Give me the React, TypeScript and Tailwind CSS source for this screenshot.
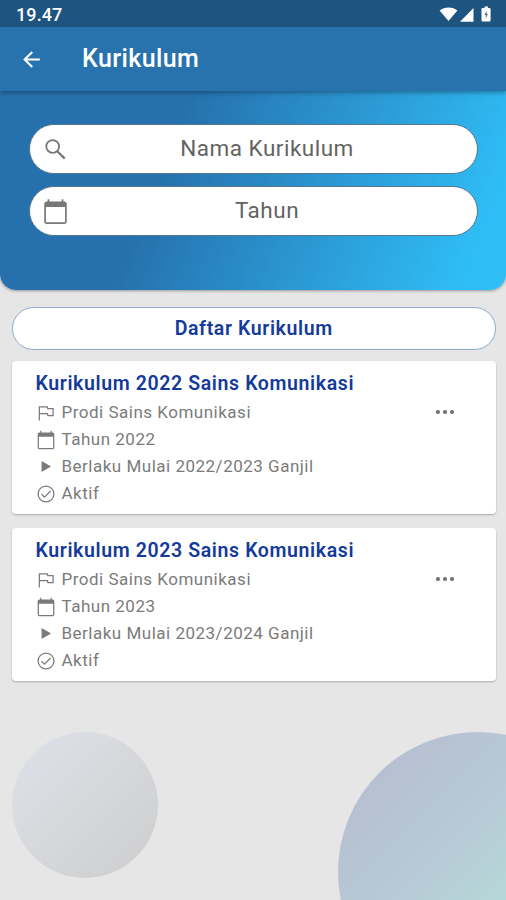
import React from "react";

type Kurikulum = { title: string; prodi: string; tahun: string; berlaku: string; status: string };

const items: Kurikulum[] = [
  {
    title: "Kurikulum 2022 Sains Komunikasi",
    prodi: "Prodi Sains Komunikasi",
    tahun: "Tahun 2022",
    berlaku: "Berlaku Mulai 2022/2023 Ganjil",
    status: "Aktif",
  },
  {
    title: "Kurikulum 2023 Sains Komunikasi",
    prodi: "Prodi Sains Komunikasi",
    tahun: "Tahun 2023",
    berlaku: "Berlaku Mulai 2023/2024 Ganjil",
    status: "Aktif",
  },
];

const glyphs = {
  back: <path d="M20 11H7.830l5.590-5.590L12 4l-8 8 8 8 1.410-1.410L7.830 13H20v-2z" />,
  search: (
    <g fill="none" stroke="currentColor" strokeWidth="1.600">
      <circle cx="9.500" cy="9.300" r="5.700" />
      <path d="M13.600 13.500l6.600 6.600" strokeWidth="2" />
    </g>
  ),
  calendar: (
    <path
      fillRule="evenodd"
      d="M20 3h-1V1h-1.500v2H6.500V1H5v2H4c-1.100 0-2 .9-2 2v16c0 1.100.9 2 2 2h16c1.100 0 2-.9 2-2V5c0-1.100-.9-2-2-2zm.500 18.500H3.500V8h17v13.500z"
    />
  ),
  flag: <path fill="none" stroke="currentColor" strokeWidth="1.500" d="M4 21V4.500h9.500l.6 2.300H20.500v8.200h-6.200l-.6-2.200H4" />,
  play: <path d="M7 5v14l12-7z" />,
  check: (
    <g fill="none" stroke="currentColor" strokeWidth="1.500">
      <circle cx="12" cy="12" r="9.500" />
      <path d="M6.500 12.200l3.700 3.600 7.300-7.400" />
    </g>
  ),
  more: (
    <>
      <circle cx="5.500" cy="12" r="1.900" />
      <circle cx="12" cy="12" r="1.900" />
      <circle cx="18.500" cy="12" r="1.900" />
    </>
  ),
};

function Icon({ name, className }: { name: keyof typeof glyphs; className: string }) {
  return (
    <svg viewBox="0 0 24 24" fill="currentColor" className={`shrink-0 ${className}`}>
      {glyphs[name]}
    </svg>
  );
}

function StatusBar() {
  return (
    <div className="flex h-[27px] items-center justify-between bg-[#1e5480] pr-[15px] pl-4 text-white">
      <span className="pt-[3px] text-[18px] leading-6 font-medium tracking-[0.1px]">19.47</span>
      <svg viewBox="0 0 52 18" fill="currentColor" className="h-[18px] w-[52px]">
        <path d="M.6 5.400C5.300 1.400 13.700 1.400 18.400 5.400L9.500 16z" />
        <path d="M34.500 3v13.800H21z" />
        <path d="M43.700 3h1.900V1.500h3.400V3h1.400q1.200 0 1.200 1.200v11.100q0 1.300-1.200 1.300h-6.700q-1.200 0-1.200-1.300v-11Q42.500 3 43.700 3z" />
        <path d="M47.600 5.500l-2.300 4.400h1.500v3.600l2.200-4.700h-1.400z" fill="#5d7893" />
      </svg>
    </div>
  );
}

function Field({ icon, label }: { icon: "search" | "calendar"; label: string }) {
  return (
    <div className="flex h-[50px] items-center rounded-full border border-[#55788f] bg-white pr-[12px] pl-[12px]">
      <Icon name={icon} className="size-[27px] text-[#777777]" />
      <span className="flex-1 pb-[2px] text-center text-[22.5px] leading-7 tracking-[0.5px] text-[#636363]">{label}</span>
    </div>
  );
}

function Row({ icon, size, text }: { icon: keyof typeof glyphs; size: string; text: string }) {
  return (
    <div className="flex h-[27px] items-center">
      <span className="mr-[6px] flex w-5 justify-center">
        <Icon name={icon} className={`${size} text-[#7a7a7a]`} />
      </span>
      <span className="text-[17px] leading-[27px] tracking-[0.5px] text-[#7b7b7b]">{text}</span>
    </div>
  );
}

function Card({ item }: { item: Kurikulum }) {
  return (
    <article className="flex h-[153px] items-start justify-between rounded-[4px] bg-white pt-[9px] pr-[38px] pl-[23.5px] shadow-[0_1px_2px_rgba(0,0,0,0.25)]">
      <div>
        <h2 className="h-[29px] pt-[0.4px] text-[19.5px] leading-[27px] font-semibold tracking-[0.62px] text-[#143a9b]">
          {item.title}
        </h2>
        <Row icon="flag" size="size-[20px]" text={item.prodi} />
        <Row icon="calendar" size="size-5" text={item.tahun} />
        <Row icon="play" size="size-[19px]" text={item.berlaku} />
        <Row icon="check" size="size-5" text={item.status} />
      </div>
      <Icon name="more" className="mt-[29px] size-[26px] text-[#6e6e6e]" />
    </article>
  );
}

export default function App() {
  return (
    <div className="relative h-[900px] w-full overflow-hidden bg-[#e6e6e6] font-[Roboto,sans-serif]">
      <div className="absolute top-[732px] left-3 size-[146px] rounded-full bg-linear-135 from-[#dee2e9] to-[#cdcdcd]" />
      <div className="absolute top-[732px] left-[338px] size-[280px] rounded-full bg-linear-135 from-[#b6c0d1] from-15% via-[#b7cad6] via-40% to-[#b4dbd8] to-65%" />
      <div className="relative flex flex-col">
        <StatusBar />
        <header className="relative z-10 flex h-16 items-center bg-[#2872ae] pl-[19px] text-white shadow-[0_2px_4px_rgba(0,0,0,0.3)]">
          <Icon name="back" className="size-[25px]" />
          <h1 className="ml-[38px] text-[25px] leading-8 font-medium tracking-[0.4px]">Kurikulum</h1>
        </header>
        <section className="flex h-[199px] flex-col gap-3 rounded-b-[16px] bg-[linear-gradient(112deg,#2671ad_33%,#2fbdf6_92%)] pt-[33px] pr-7 pl-[29px] shadow-[0_1px_3px_rgba(0,0,0,0.35)]">
          <Field icon="search" label="Nama Kurikulum" />
          <Field icon="calendar" label="Tahun" />
        </section>
        <main className="flex flex-col pt-[17px] pr-[10px] pl-[11.5px]">
          <div className="flex h-[43px] items-center justify-center rounded-full border border-[#8fabcf] bg-white text-[19.5px] font-semibold tracking-[0.62px] text-[#143a9b]">
            Daftar Kurikulum
          </div>
          <div className="mt-[11px] flex flex-col gap-[14px] px-[0.5px]">
            {items.map((item) => (
              <Card key={item.title} item={item} />
            ))}
          </div>
        </main>
      </div>
    </div>
  );
}
